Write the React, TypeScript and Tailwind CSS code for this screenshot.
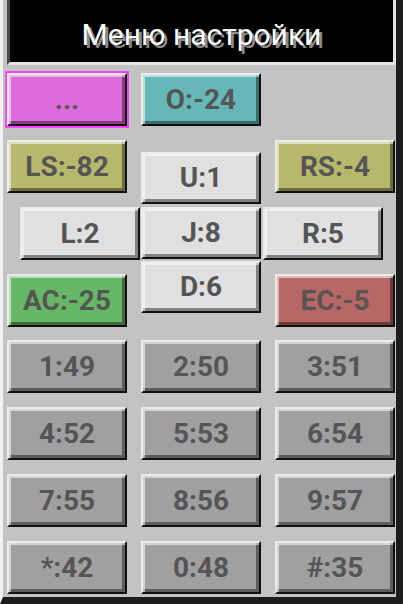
const bevel =
  "flex shrink-0 items-center justify-center border-2 border-t-[#ececec] border-l-[#ececec] border-r-[#111] border-b-[#111] shadow-[inset_2px_2px_0_rgba(255,255,255,0.55),inset_-3px_-3px_0_rgba(0,0,0,0.42)] font-['Roboto',sans-serif] text-[28px] font-bold leading-none text-[#555]";

type BtnProps = {
  label: string;
  color: string;
  className?: string;
};

function Btn({ label, color, className = "" }: BtnProps) {
  return <div className={`${bevel} ${color} w-[120px] ${className}`}>{label}</div>;
}

const keypad = [
  ["1:49", "2:50", "3:51"],
  ["4:52", "5:53", "6:54"],
  ["7:55", "8:56", "9:57"],
  ["*:42", "0:48", "#:35"],
];

export default function App() {
  return (
    <div className="flex h-[604px] w-[403px] flex-col overflow-hidden border-l-[3px] border-r-[7px] border-b-[7px] border-l-[#f2f2f2] border-r-[#1c1c1c] border-b-[#1c1c1c] bg-[#c3c3c3]">
      <div className="ml-[4px] flex h-[65px] w-[389px] shrink-0 items-center justify-center border-l-[3px] border-b-[3px] border-r-[3px] border-l-[#4a4a4a] border-b-[#e6e6e6] border-r-[#e6e6e6] bg-black pt-[6px] font-['Roboto',sans-serif] text-[30px] text-white [text-shadow:3px_3px_0_#8a8a8a]">
        Меню настройки
      </div>

      <div className="ml-[4px] mt-[8px] flex gap-[14px]">
        <Btn
          label="..."
          color="bg-[#dc6cdc] outline-2 outline-[#ff44ff]"
          className="h-[53px]"
        />
        <Btn label="O:-24" color="bg-[#66b8b8]" className="h-[53px]" />
      </div>

      <div className="ml-[4px] mt-[14px] flex gap-[14px]">
        <div className="flex w-[120px] flex-col gap-[14px]">
          <Btn label="LS:-82" color="bg-[#b8b86c]" className="h-[53px]" />
          <Btn label="L:2" color="bg-[#e0e0e0]" className="ml-[13px] h-[53px]" />
          <Btn label="AC:-25" color="bg-[#66b866]" className="h-[53px]" />
        </div>
        <div className="mt-[12px] flex w-[120px] flex-col">
          <Btn label="U:1" color="bg-[#e0e0e0]" className="h-[52px]" />
          <Btn label="J:8" color="bg-[#e0e0e0]" className="mt-[3px] h-[52px]" />
          <Btn label="D:6" color="bg-[#e0e0e0]" className="mt-[2px] h-[52px]" />
        </div>
        <div className="flex w-[120px] flex-col gap-[14px]">
          <Btn label="RS:-4" color="bg-[#b8b86c]" className="h-[53px]" />
          <Btn label="R:5" color="bg-[#e0e0e0]" className="-ml-[12px] h-[53px]" />
          <Btn label="EC:-5" color="bg-[#b86666]" className="h-[53px]" />
        </div>
      </div>

      <div className="ml-[4px] mt-[13px] grid grid-cols-[120px_120px_120px] gap-x-[14px] gap-y-[14px]">
        {keypad.flat().map((k) => (
          <Btn key={k} label={k} color="bg-[#a0a0a0]" className="h-[53px]" />
        ))}
      </div>
    </div>
  );
}
